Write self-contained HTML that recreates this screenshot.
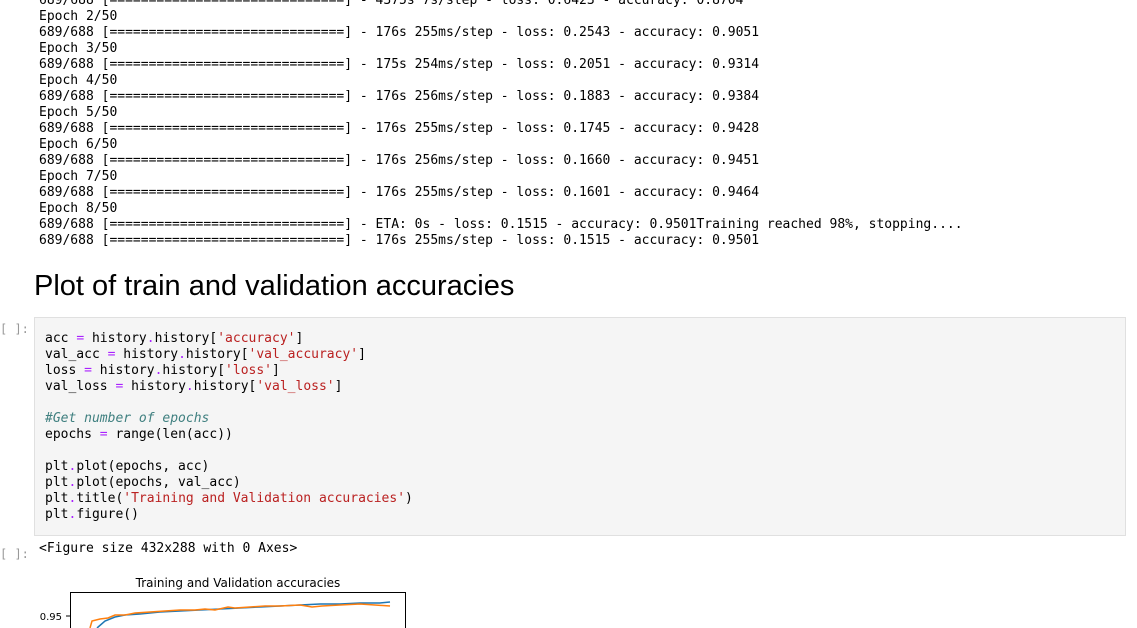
<!DOCTYPE html>
<html><head><style>
body{margin:0;width:1137px;height:628px;overflow:hidden;background:#fff;position:relative;font-family:"DejaVu Sans Mono","Liberation Mono",monospace;}
pre{margin:0;font-family:"DejaVu Sans Mono","Liberation Mono",monospace;font-size:13px;line-height:16px;color:#000;}
.out{position:absolute;left:39px;top:-7px;}
h2{position:absolute;left:34px;top:270px;margin:0;font:29px "Liberation Sans",sans-serif;color:#000;}
.prompt{position:absolute;left:0;font-size:12px;color:#999;font-family:"DejaVu Sans Mono",monospace;}
.cell{position:absolute;left:34px;top:317px;width:1092px;height:219px;background:#f5f5f5;border:1px solid #e0e0e0;box-sizing:border-box;}
.cell pre{position:absolute;left:10px;top:13px;}
.k{color:#aa22ff}.s{color:#ba2121}.c{color:#408080;font-style:italic}
</style></head><body>
<pre class="out">689/688 [==============================] - 4375s 7s/step - loss: 0.6423 - accuracy: 0.8704
Epoch 2/50
689/688 [==============================] - 176s 255ms/step - loss: 0.2543 - accuracy: 0.9051
Epoch 3/50
689/688 [==============================] - 175s 254ms/step - loss: 0.2051 - accuracy: 0.9314
Epoch 4/50
689/688 [==============================] - 176s 256ms/step - loss: 0.1883 - accuracy: 0.9384
Epoch 5/50
689/688 [==============================] - 176s 255ms/step - loss: 0.1745 - accuracy: 0.9428
Epoch 6/50
689/688 [==============================] - 176s 256ms/step - loss: 0.1660 - accuracy: 0.9451
Epoch 7/50
689/688 [==============================] - 176s 255ms/step - loss: 0.1601 - accuracy: 0.9464
Epoch 8/50
689/688 [==============================] - ETA: 0s - loss: 0.1515 - accuracy: 0.9501Training reached 98%, stopping....
689/688 [==============================] - 176s 255ms/step - loss: 0.1515 - accuracy: 0.9501</pre>
<h2>Plot of train and validation accuracies</h2>
<div class="prompt" style="top:322px">[ ]:</div>
<div class="cell"><pre>acc <span class="k">=</span> history<span class="k">.</span>history[<span class="s">'accuracy'</span>]
val_acc <span class="k">=</span> history<span class="k">.</span>history[<span class="s">'val_accuracy'</span>]
loss <span class="k">=</span> history<span class="k">.</span>history[<span class="s">'loss'</span>]
val_loss <span class="k">=</span> history<span class="k">.</span>history[<span class="s">'val_loss'</span>]

<span class="c">#Get number of epochs</span>
epochs <span class="k">=</span> range(len(acc))

plt<span class="k">.</span>plot(epochs, acc)
plt<span class="k">.</span>plot(epochs, val_acc)
plt<span class="k">.</span>title(<span class="s">'Training and Validation accuracies'</span>)
plt<span class="k">.</span>figure()</pre></div>
<div class="prompt" style="top:547px">[ ]:</div>
<pre style="position:absolute;left:39px;top:541px">&lt;Figure size 432x288 with 0 Axes&gt;</pre>
<svg style="position:absolute;left:0;top:570px" width="420" height="58">
<text x="238" y="17" font-family="DejaVu Sans,sans-serif" font-size="12" text-anchor="middle">Training and Validation accuracies</text>
<rect x="70.5" y="22.5" width="335" height="40" fill="none" stroke="#000" stroke-width="1"/>
<line x1="66" y1="46" x2="70" y2="46" stroke="#000"/>
<text x="62" y="50" font-family="DejaVu Sans,sans-serif" font-size="10" text-anchor="end">0.95</text>
<polyline fill="none" stroke="#1f77b4" stroke-width="1.5" points="97,58 105,51 115,47 125,45 140,44 160,42 180,41 200,40 220,39 240,38 260,37 280,36 300,35 320,34 340,34 360,33 380,33 390,32"/>
<polyline fill="none" stroke="#ff7f0e" stroke-width="1.5" points="90,58 92,51 100,49 108,48 115,45 125,45 135,43 150,42 165,41 180,40 195,40 205,39 215,40 228,37 235,38 250,37 265,36 280,36 300,35 312,37 322,36 340,35 360,34 375,35 390,36"/>
</svg>
</body></html>
